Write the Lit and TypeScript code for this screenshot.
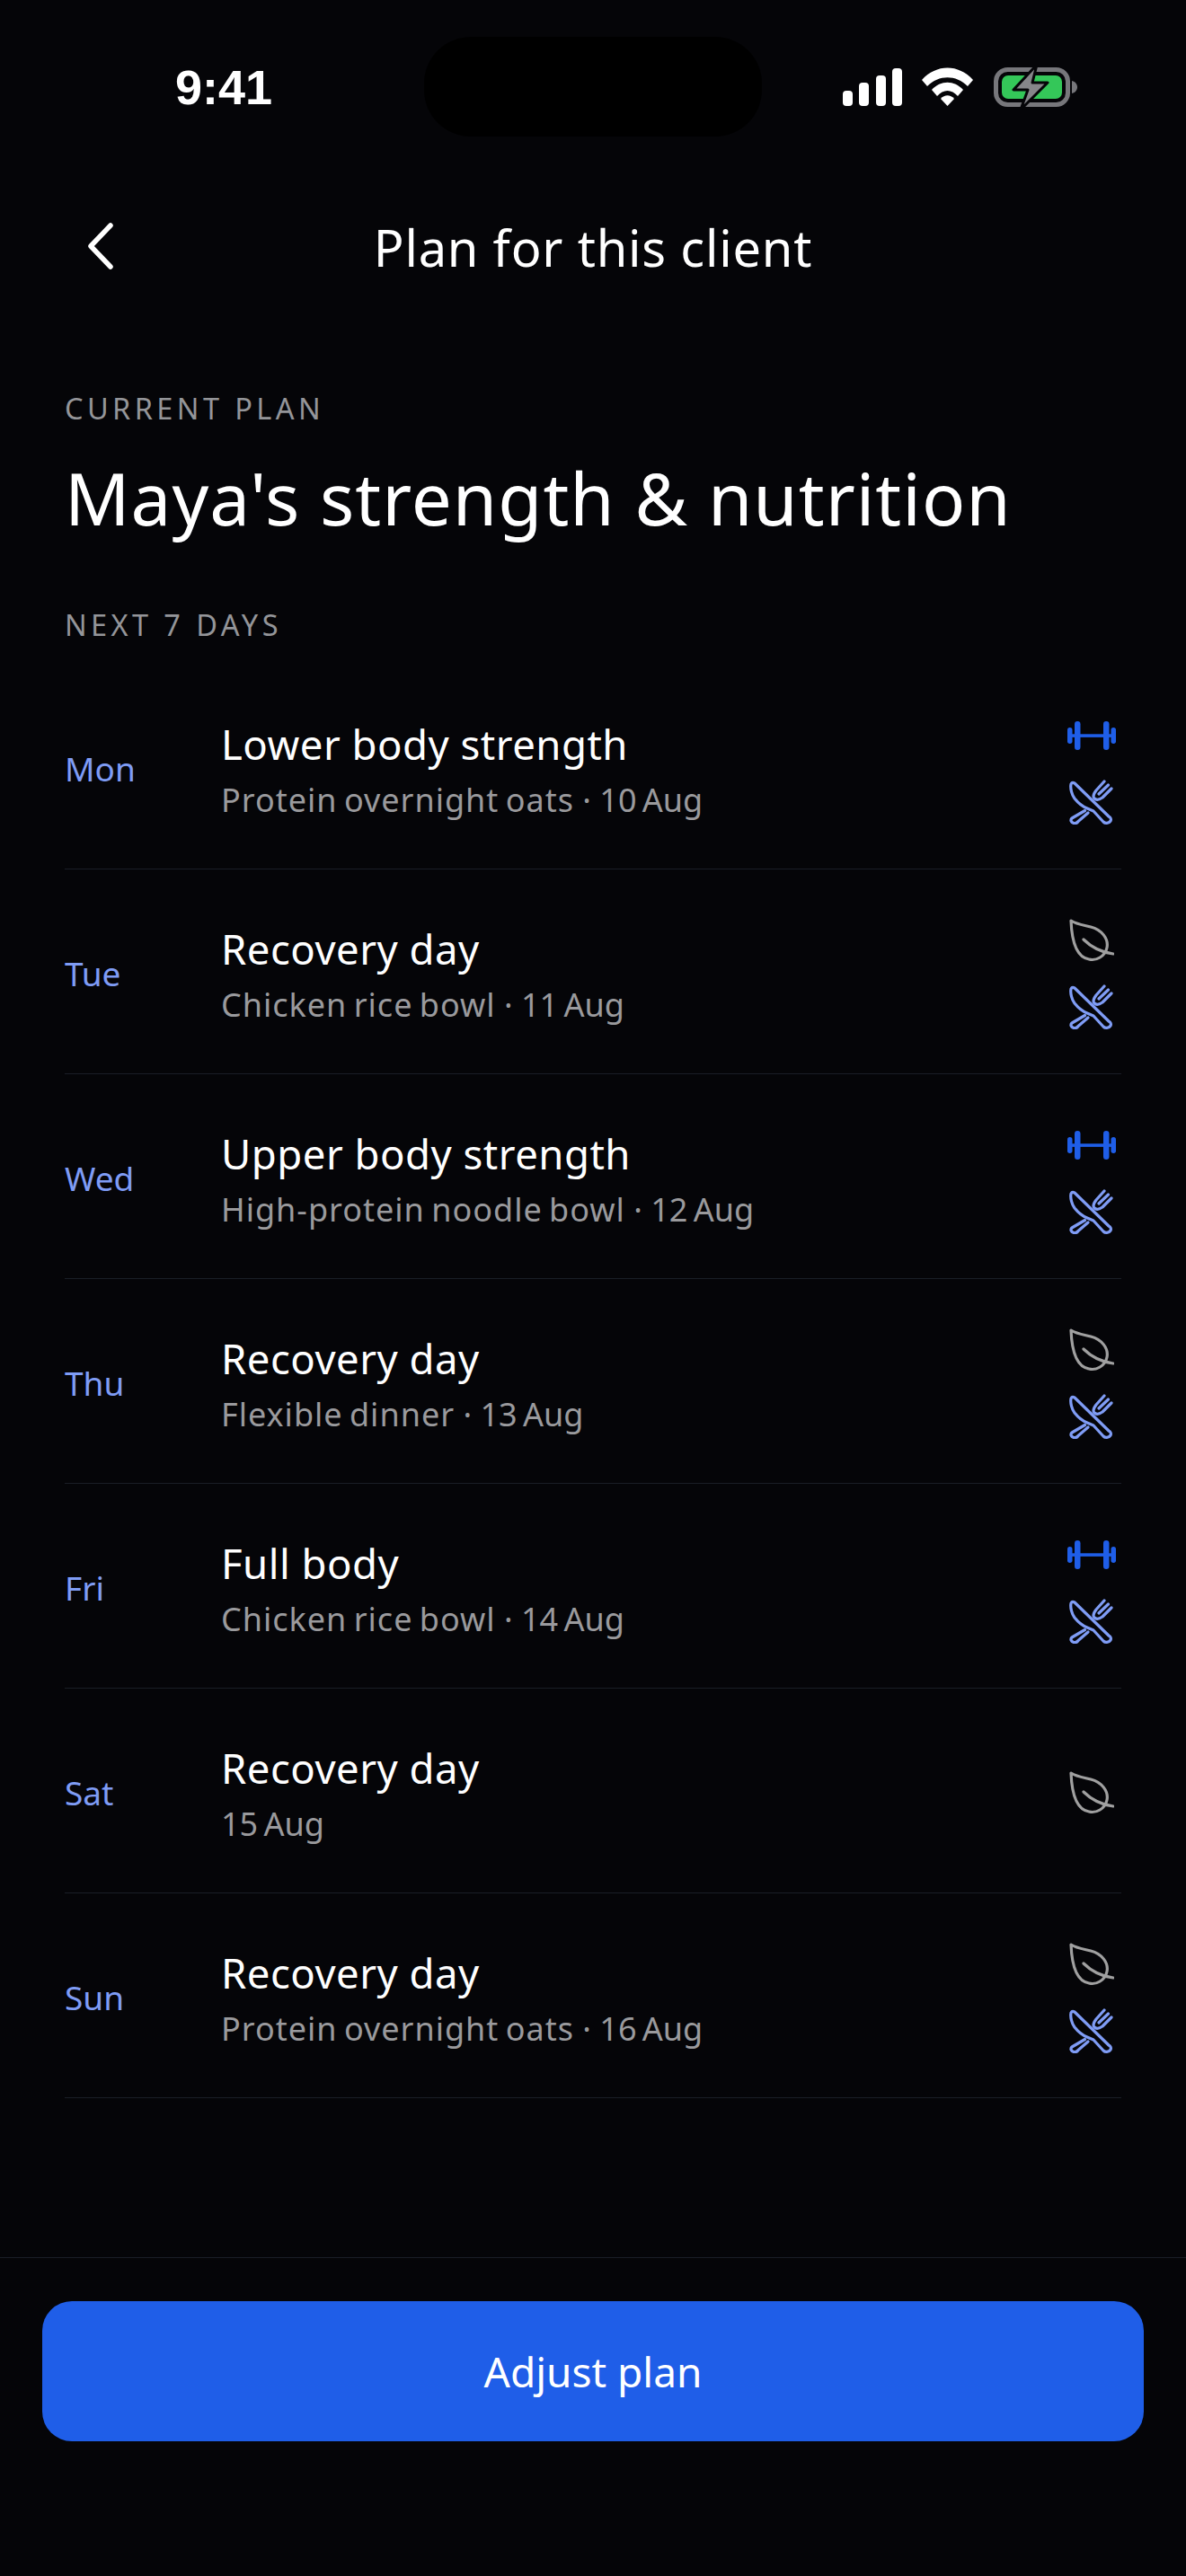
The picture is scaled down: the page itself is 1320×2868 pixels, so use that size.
import { LitElement, html, css } from "lit";
import { customElement } from "lit/decorators.js";

const dumbbell = html`<svg class="ic" viewBox="0 0 54 32" width="54" height="32" fill="#1f5ee8">
<rect x="4" y="14.300" width="46" height="3.600"/>
<rect x="8" y="0" width="6.500" height="32" rx="3.250"/><rect x="40" y="0" width="6.500" height="32" rx="3.250"/>
<rect x="0" y="7" width="5.500" height="18" rx="2.700"/><rect x="48.500" y="7" width="5.500" height="18" rx="2.700"/></svg>`;
const leaf = html`<svg class="ic" viewBox="0 0 50 48" width="50" height="48" fill="none" stroke="#a0a0a0" stroke-width="3.200" stroke-linecap="round" stroke-linejoin="round">
<path d="M2 2C8 6 16 7 24 9C36 12 44 22 42 32C40 42 30 47 22 45C10 43 3 28 2 2Z"/><path d="M16 23C24 31 34 37 49 39"/></svg>`;
const utensils = html`<svg class="ic" viewBox="0 0 50 50" width="50" height="50" fill="none" stroke="#7f9cf5" stroke-width="3.200" stroke-linecap="round" stroke-linejoin="round">
<path d="M2 5C1 10 3 17 6 21C10 26 15 30 20 32L27 35L38 47C40 49 44 49 46 46C47 44 46 42 44 41L6 4C4 3 3 3 2 5Z"/>
<path d="M17.500 34.500L3 43C1 45 2 47.500 5 48.500C7 49 9 48 10 46.500L21 37"/>
<path d="M39 2L30 12C27 16 26 19 28 21C30 23 34 22 37 20L47 10M43.500 6L33 16"/></svg>`;

const rows = [
  ["Mon", "Lower body strength", "Protein overnight oats", "10 Aug", "d", true],
  ["Tue", "Recovery day", "Chicken rice bowl", "11 Aug", "l", true],
  ["Wed", "Upper body strength", "High-protein noodle bowl", "12 Aug", "d", true],
  ["Thu", "Recovery day", "Flexible dinner", "13 Aug", "l", true],
  ["Fri", "Full body", "Chicken rice bowl", "14 Aug", "d", true],
  ["Sat", "Recovery day", "", "15 Aug", "l", false],
  ["Sun", "Recovery day", "Protein overnight oats", "16 Aug", "l", true],
] as const;

@customElement("app-root")
export class AppRoot extends LitElement {
  static styles = css`
    :host { display: block; width: 1320px; height: 2868px; background: #050508; color: #fff; font-family: "Noto Sans", sans-serif; overflow: hidden; }
    * { box-sizing: border-box; }
    .page { height: 2868px; display: flex; flex-direction: column; }
    .status { height: 168px; position: relative; display: flex; justify-content: space-between; align-items: flex-start; }
    .time { font: 700 54px/54px "Liberation Sans", sans-serif; margin: 70px 0 0 195px; width: 110px; }
    .island { position: absolute; left: 472px; top: 41px; width: 376px; height: 111px; border-radius: 52px; background: #000; }
    .sys { margin: 72px 117px 0 0; display: block; }
    .nav { height: 214px; position: relative; display: flex; align-items: center; justify-content: center; }
    .back { position: absolute; left: 96px; top: 80px; }
    .navt { font-size: 56px; line-height: 76px; letter-spacing: 0.8px; }
    .main { padding: 0 72px; flex: 1; }
    .label { font-size: 32.5px; line-height: 44px; letter-spacing: 4.4px; color: #949599; }
    .l1 { margin-top: 51px; }
    .h1 { font-size: 80px; line-height: 116px; margin-top: 19px; letter-spacing: 1px; }
    .l2 { margin-top: 62px; margin-bottom: 22px; }
    .row { height: 228px; display: flex; align-items: center; border-bottom: 1.5px solid #1a1e26; }
    .day { width: 174px; font-size: 37px; line-height: 50px; color: #7f9cf5; margin-top: 4px; }
    .txt { flex: 1; padding-top: 8px; }
    .t { font-size: 45.5px; line-height: 60px; letter-spacing: 0.5px; }
    .s { font-size: 36px; line-height: 52px; margin-top: 7px; color: #9a9a9d; }
    .n { letter-spacing: 1px; word-spacing: -3px; }
    .d { word-spacing: -3px; }
    .icons { width: 60px; display: flex; flex-direction: column; gap: 20px; margin-top: 4px; }
    .slot { height: 54px; display: flex; align-items: center; padding-left: 2px; }
    .slot.wide { padding-left: 0; }
    .ic { display: block; }
    .foot { height: 355px; border-top: 1.5px solid #1a1e26; padding: 48px 47px 0; }
    .btn { height: 156px; border-radius: 33px; background: #1f5ee8; color: #fff; display: flex; align-items: center; justify-content: center; font-size: 46px; }
  `;
  render() {
    return html`<div class="page">
      <div class="status">
        <div class="time">9:41</div>
        <div class="island"></div>
        <svg class="sys" width="265" height="50" viewBox="0 0 265 50">
          <g fill="#fff">
            <rect x="0" y="29" width="11" height="17" rx="4"/><rect x="18" y="20" width="11" height="26" rx="4"/><rect x="37" y="12" width="11" height="34" rx="4"/><rect x="55" y="4" width="11" height="42" rx="4"/>
            <path d="M88 17C104 -1 129 -1 145 17L139 24C126 11 107 11 94 24Z"/>
            <path d="M99 28C109 17 124 17 134 28L128 35C121 27 112 27 105 35Z"/>
            <path d="M109 38C113 33 120 33 124 38L116.500 46Z"/>
          </g>
          <rect x="170.500" y="5.500" width="80" height="39" rx="13" fill="none" stroke="#77777b" stroke-width="5"/>
          <rect x="177" y="12" width="67" height="26" rx="7" fill="#34c759"/>
          <path d="M255 18C259 19 261 22 261 25C261 28 259 31 255 32Z" fill="#77777b"/>
          <path d="M216 0L190 28H206L198 50L228 20H211Z" fill="#86868a" stroke="#050508" stroke-width="3" stroke-linejoin="round"/>
        </svg>
      </div>
      <div class="nav">
        <svg class="back" width="34" height="52" viewBox="0 0 34 52" fill="none" stroke="#fff" stroke-width="5.500" stroke-linecap="round" stroke-linejoin="round"><path d="M27 3L5 26L27 49"/></svg>
        <div class="navt">Plan for this client</div>
      </div>
      <div class="main">
        <div class="label l1">CURRENT PLAN</div>
        <div class="h1">Maya's strength &amp; nutrition</div>
        <div class="label l2">NEXT 7 DAYS</div>
        ${rows.map(r => html`<div class="row">
          <div class="day">${r[0]}</div>
          <div class="txt"><div class="t">${r[1]}</div><div class="s">${r[2] ? html`<span class="n">${r[2]}</span> · ` : ""}<span class="d">${r[3]}</span></div></div>
          <div class="icons">
            <div class="slot ${r[4] === "d" ? "wide" : ""}">${r[4] === "d" ? dumbbell : leaf}</div>
            ${r[5] ? html`<div class="slot">${utensils}</div>` : ""}
          </div>
        </div>`)}
      </div>
      <div class="foot"><div class="btn">Adjust plan</div></div>
    </div>`;
  }
}
